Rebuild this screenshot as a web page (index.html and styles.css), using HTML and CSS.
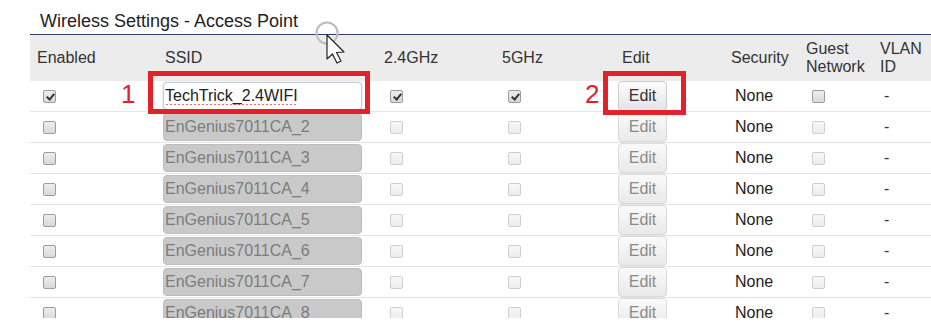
FILE: index.html
```html
<!DOCTYPE html>
<html lang="en">
<head>
    <meta charset="UTF-8">
    <meta name="viewport" content="width=device-width, initial-scale=1.0">
    <title>Wireless Settings - Access Point</title>
    <link rel="stylesheet" href="styles.css">
</head>
<body>
    <div class="page">
        <div class="panel">
            <h2 class="title">Wireless Settings - Access Point</h2>
            <table class="ap-table">
                <colgroup>
                    <col class="c-enabled">
                    <col class="c-ssid">
                    <col class="c-24">
                    <col class="c-5">
                    <col class="c-edit">
                    <col class="c-sec">
                    <col class="c-guest">
                    <col class="c-vlan">
                </colgroup>
                <thead>
                    <tr>
                        <th>Enabled</th>
                        <th>SSID</th>
                        <th>2.4GHz</th>
                        <th>5GHz</th>
                        <th>Edit</th>
                        <th>Security</th>
                        <th>Guest<br>Network</th>
                        <th>VLAN<br>ID</th>
                    </tr>
                </thead>
                <tbody>
                    <tr>
                        <td><input type="checkbox" class="cb" checked></td>
                        <td><input type="text" class="ssid ssid-active" value="TechTrick_2.4WIFI" spellcheck="false"></td>
                        <td><input type="checkbox" class="cb" checked></td>
                        <td><input type="checkbox" class="cb" checked></td>
                        <td><button class="edit-btn">Edit</button></td>
                        <td><span class="sec">None</span></td>
                        <td><input type="checkbox" class="cb"></td>
                        <td><span class="vlan">-</span></td>
                    </tr>
                    <tr>
                        <td><input type="checkbox" class="cb"></td>
                        <td><input type="text" class="ssid" value="EnGenius7011CA_2" disabled></td>
                        <td><input type="checkbox" class="cb" disabled></td>
                        <td><input type="checkbox" class="cb" disabled></td>
                        <td><button class="edit-btn" disabled>Edit</button></td>
                        <td><span class="sec">None</span></td>
                        <td><input type="checkbox" class="cb" disabled></td>
                        <td><span class="vlan">-</span></td>
                    </tr>
                    <tr>
                        <td><input type="checkbox" class="cb"></td>
                        <td><input type="text" class="ssid" value="EnGenius7011CA_3" disabled></td>
                        <td><input type="checkbox" class="cb" disabled></td>
                        <td><input type="checkbox" class="cb" disabled></td>
                        <td><button class="edit-btn" disabled>Edit</button></td>
                        <td><span class="sec">None</span></td>
                        <td><input type="checkbox" class="cb" disabled></td>
                        <td><span class="vlan">-</span></td>
                    </tr>
                    <tr>
                        <td><input type="checkbox" class="cb"></td>
                        <td><input type="text" class="ssid" value="EnGenius7011CA_4" disabled></td>
                        <td><input type="checkbox" class="cb" disabled></td>
                        <td><input type="checkbox" class="cb" disabled></td>
                        <td><button class="edit-btn" disabled>Edit</button></td>
                        <td><span class="sec">None</span></td>
                        <td><input type="checkbox" class="cb" disabled></td>
                        <td><span class="vlan">-</span></td>
                    </tr>
                    <tr>
                        <td><input type="checkbox" class="cb"></td>
                        <td><input type="text" class="ssid" value="EnGenius7011CA_5" disabled></td>
                        <td><input type="checkbox" class="cb" disabled></td>
                        <td><input type="checkbox" class="cb" disabled></td>
                        <td><button class="edit-btn" disabled>Edit</button></td>
                        <td><span class="sec">None</span></td>
                        <td><input type="checkbox" class="cb" disabled></td>
                        <td><span class="vlan">-</span></td>
                    </tr>
                    <tr>
                        <td><input type="checkbox" class="cb"></td>
                        <td><input type="text" class="ssid" value="EnGenius7011CA_6" disabled></td>
                        <td><input type="checkbox" class="cb" disabled></td>
                        <td><input type="checkbox" class="cb" disabled></td>
                        <td><button class="edit-btn" disabled>Edit</button></td>
                        <td><span class="sec">None</span></td>
                        <td><input type="checkbox" class="cb" disabled></td>
                        <td><span class="vlan">-</span></td>
                    </tr>
                    <tr>
                        <td><input type="checkbox" class="cb"></td>
                        <td><input type="text" class="ssid" value="EnGenius7011CA_7" disabled></td>
                        <td><input type="checkbox" class="cb" disabled></td>
                        <td><input type="checkbox" class="cb" disabled></td>
                        <td><button class="edit-btn" disabled>Edit</button></td>
                        <td><span class="sec">None</span></td>
                        <td><input type="checkbox" class="cb" disabled></td>
                        <td><span class="vlan">-</span></td>
                    </tr>
                    <tr>
                        <td><input type="checkbox" class="cb"></td>
                        <td><input type="text" class="ssid" value="EnGenius7011CA_8" disabled></td>
                        <td><input type="checkbox" class="cb" disabled></td>
                        <td><input type="checkbox" class="cb" disabled></td>
                        <td><button class="edit-btn" disabled>Edit</button></td>
                        <td><span class="sec">None</span></td>
                        <td><input type="checkbox" class="cb" disabled></td>
                        <td><span class="vlan">-</span></td>
                    </tr>
                </tbody>
            </table>
        </div>

        <!-- annotations drawn over the screenshot -->
        <span class="mark-num num-1">1</span>
        <div class="mark-box box-1"></div>
        <span class="mark-num num-2">2</span>
        <div class="mark-box box-2"></div>

        <svg class="cursor" width="40" height="46" viewBox="0 0 40 46">
            <circle cx="12" cy="12" r="10.5" fill="none" stroke="#bdbdbd" stroke-width="2"/>
            <path d="M12 14 L12 38 L17.5 33 L22 42 L26 40 L21.5 31.5 L29 31 Z" fill="#fff" stroke="#222" stroke-width="1.2" stroke-linejoin="round"/>
        </svg>
    </div>
</body>
</html>
```

FILE: styles.css
```css
body {
    margin: 0;
    background: #fff;
    font-family: "Liberation Sans", Arial, sans-serif;
    color: #333;
}
.page {
    position: relative;
    height: 318px;
    overflow: hidden;
}
.panel {
    margin-left: 30px;
}
.title {
    margin: 0;
    height: 35px;
    box-sizing: border-box;
    padding: 11px 0 0 10px;
    font-size: 18px;
    font-weight: normal;
    line-height: 21px;
    color: #222;
    border-bottom: 1px solid #2d4262;
}
.ap-table {
    width: 901px;
    table-layout: fixed;
    border-collapse: collapse;
    font-size: 16px;
}
.c-enabled { width: 128px; }
.c-ssid { width: 219px; }
.c-24 { width: 118px; }
.c-5 { width: 120px; }
.c-edit { width: 109px; }
.c-sec { width: 75px; }
.c-guest { width: 74px; }
.c-vlan { width: 58px; }

.ap-table th {
    height: 46px;
    padding: 0 0 0 7px;
    background-color: #ececec;
    font-weight: normal;
    text-align: left;
    line-height: 18px;
    color: #333;
}
.ap-table td {
    height: 30px;
    padding: 0 0 0 7px;
    border-bottom: 1px solid #e4e4e4;
    vertical-align: middle;
    line-height: 18px;
}

/* checkboxes */
.cb {
    appearance: none;
    -webkit-appearance: none;
    position: relative;
    display: block;
    width: 13px;
    height: 13px;
    margin: 0 0 0 6px;
    border: 1px solid #9c9c9c;
    border-radius: 2px;
    background: linear-gradient(#ededed, #d9d9d9);
    box-sizing: border-box;
}
.cb:checked::after {
    content: "";
    position: absolute;
    left: 4px;
    top: 1px;
    width: 3px;
    height: 6px;
    border: solid #333;
    border-width: 0 2px 2px 0;
    transform: rotate(40deg);
}
.cb:disabled {
    border-color: #cfcfcf;
    background: linear-gradient(#f7f7f7, #ececec);
}

/* ssid inputs */
.ssid {
    display: block;
    width: 199px;
    height: 28px;
    margin-left: -2px;
    padding: 0 0 0 1px;
    box-sizing: border-box;
    border: 1px solid #bdbdbd;
    border-radius: 4px;
    background: #c9c9c9;
    font-family: "Liberation Sans", Arial, sans-serif;
    font-size: 16px;
    color: #7c7c7c;
}
.ssid-active {
    border-color: #c3ccd6;
    box-shadow: 0 0 2px rgba(120, 150, 190, 0.45);
    color: #222;
    /* spell-check squiggle under the typed name */
    background: repeating-linear-gradient(90deg, #e07070 0 2px, transparent 2px 4px) 2px 21px / 132px 1px no-repeat, #fff;
}

/* edit buttons */
.edit-btn {
    display: block;
    width: 49px;
    height: 30px;
    margin-left: -4px;
    padding: 0;
    border: 1px solid #cbcbcb;
    border-radius: 4px;
    background: linear-gradient(#fdfdfd, #e4e4e4);
    font-family: "Liberation Sans", Arial, sans-serif;
    font-size: 16px;
    color: #333;
}
.edit-btn:disabled {
    color: #8a8a8a;
    border-color: #dadada;
    background: linear-gradient(#fafafa, #e9e9e9);
}

.sec {
    margin-left: 4px;
    color: #222;
}
.vlan {
    margin-left: 4px;
    color: #333;
}

/* red annotation boxes and numbers */
.mark-box {
    position: absolute;
    border: 5px solid #e3212b;
    box-sizing: border-box;
}
.box-1 {
    left: 148px;
    top: 71px;
    width: 222px;
    height: 43px;
}
.box-2 {
    left: 603px;
    top: 71px;
    width: 83px;
    height: 44px;
}
.mark-num {
    position: absolute;
    font-size: 26px;
    line-height: 30px;
    color: #e3212b;
}
.num-1 {
    left: 121px;
    top: 79px;
}
.num-2 {
    left: 585px;
    top: 79px;
}
.cursor {
    position: absolute;
    left: 315px;
    top: 21px;
}
```
